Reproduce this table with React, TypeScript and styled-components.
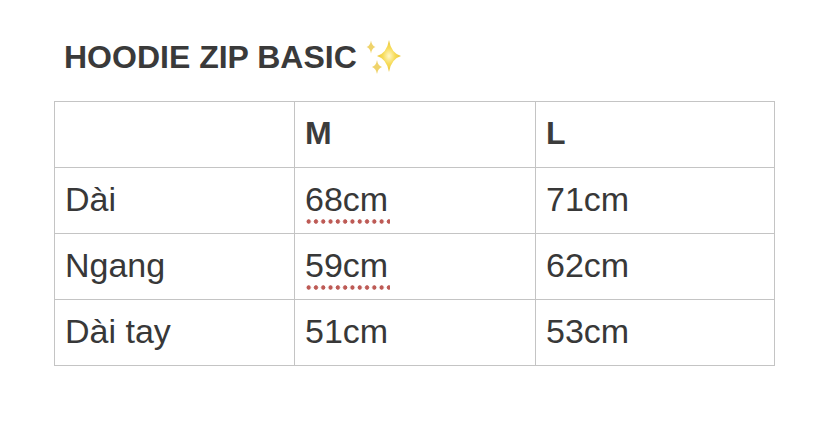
import styled, { createGlobalStyle } from 'styled-components';

const GlobalStyle = createGlobalStyle`
    html, body {
        margin: 0;
        padding: 0;
        background: #ffffff;
    }
    body {
        font-family: 'Liberation Sans', Arial, sans-serif;
        color: #353535;
    }
`;

const Page = styled.div`
    width: 828px;
    height: 432px;
    padding: 37px 0 0 54px;
    box-sizing: border-box;
`;

const Title = styled.h1`
    margin: 0 0 0 10px;
    height: 64px;
    display: flex;
    align-items: flex-start;
    font-size: 32px;
    font-weight: 700;
    line-height: 40px;
    color: #3a3a3a;
    letter-spacing: 0;
`;

const Sparkles = styled.svg`
    width: 46px;
    height: 42px;
    margin-left: 3px;
    margin-top: -1px;
`;

const Table = styled.table`
    border-collapse: collapse;
    table-layout: fixed;
    width: 720px;
`;

const Col = styled.col<{ $w: number }>`
    width: ${(p) => p.$w}px;
`;

const Cell = styled.td<{ $head?: boolean }>`
    border: 1px solid #c4c4c4;
    height: 66px;
    padding: 0 0 4px 10px;
    box-sizing: border-box;
    font-size: ${(p) => (p.$head ? '32px' : '34px')};
    font-weight: ${(p) => (p.$head ? 700 : 400)};
    color: ${(p) => (p.$head ? '#3c3c3c' : '#383838')};
    vertical-align: middle;
    line-height: 1;
`;

const Misspelled = styled.span`
    display: inline-block;
    position: relative;
    &::after {
        content: '';
        position: absolute;
        left: 0;
        right: -2px;
        bottom: -8px;
        height: 5px;
        background-image: radial-gradient(circle at center, #bd5a55 0, #bd5a55 1.9px, transparent 2.5px);
        background-size: 7.3px 5px;
        background-repeat: repeat-x;
    }
`;

const Star = ({ cx, cy, rx, ry, fill }: { cx: number; cy: number; rx: number; ry: number; fill: string }) => {
    const kx = rx * 0.18;
    const ky = ry * 0.18;
    const d = `M${cx} ${cy - ry} Q${cx + kx} ${cy - ky} ${cx + rx} ${cy} Q${cx + kx} ${cy + ky} ${cx} ${cy + ry} Q${cx - kx} ${cy + ky} ${cx - rx} ${cy} Q${cx - kx} ${cy - ky} ${cx} ${cy - ry}Z`;
    return <path d={d} fill={fill} />;
};

const rows = [
    { name: 'Dài', m: '68cm', l: '71cm', flag: true },
    { name: 'Ngang', m: '59cm', l: '62cm', flag: true },
    { name: 'Dài tay', m: '51cm', l: '53cm', flag: false },
];

const App = () => {
    return (
        <>
            <GlobalStyle />
            <Page>
                <Title>
                    HOODIE ZIP BASIC
                    <Sparkles viewBox="0 0 46 42">
                        <defs>
                            <radialGradient id="glow" cx="0.5" cy="0.5" r="0.5">
                                <stop offset="0" stopColor="#fff7c8" />
                                <stop offset="0.5" stopColor="#f7dc5a" />
                                <stop offset="1" stopColor="#e9c53a" />
                            </radialGradient>
                        </defs>
                        <Star cx={29} cy={20} rx={12} ry={16} fill="url(#glow)" />
                        <Star cx={11} cy={11} rx={4.5} ry={6.5} fill="#efd36a" />
                        <Star cx={17} cy={31} rx={5} ry={7} fill="#efd36a" />
                    </Sparkles>
                </Title>
                <Table>
                    <colgroup>
                        <Col $w={240} />
                        <Col $w={241} />
                        <Col $w={239} />
                    </colgroup>
                    <tbody>
                        <tr>
                            <Cell $head />
                            <Cell $head>M</Cell>
                            <Cell $head>L</Cell>
                        </tr>
                        {rows.map((r) => (
                            <tr key={r.name}>
                                <Cell>{r.name}</Cell>
                                <Cell>{r.flag ? <Misspelled>{r.m}</Misspelled> : r.m}</Cell>
                                <Cell>{r.l}</Cell>
                            </tr>
                        ))}
                    </tbody>
                </Table>
            </Page>
        </>
    );
};

export default App;
